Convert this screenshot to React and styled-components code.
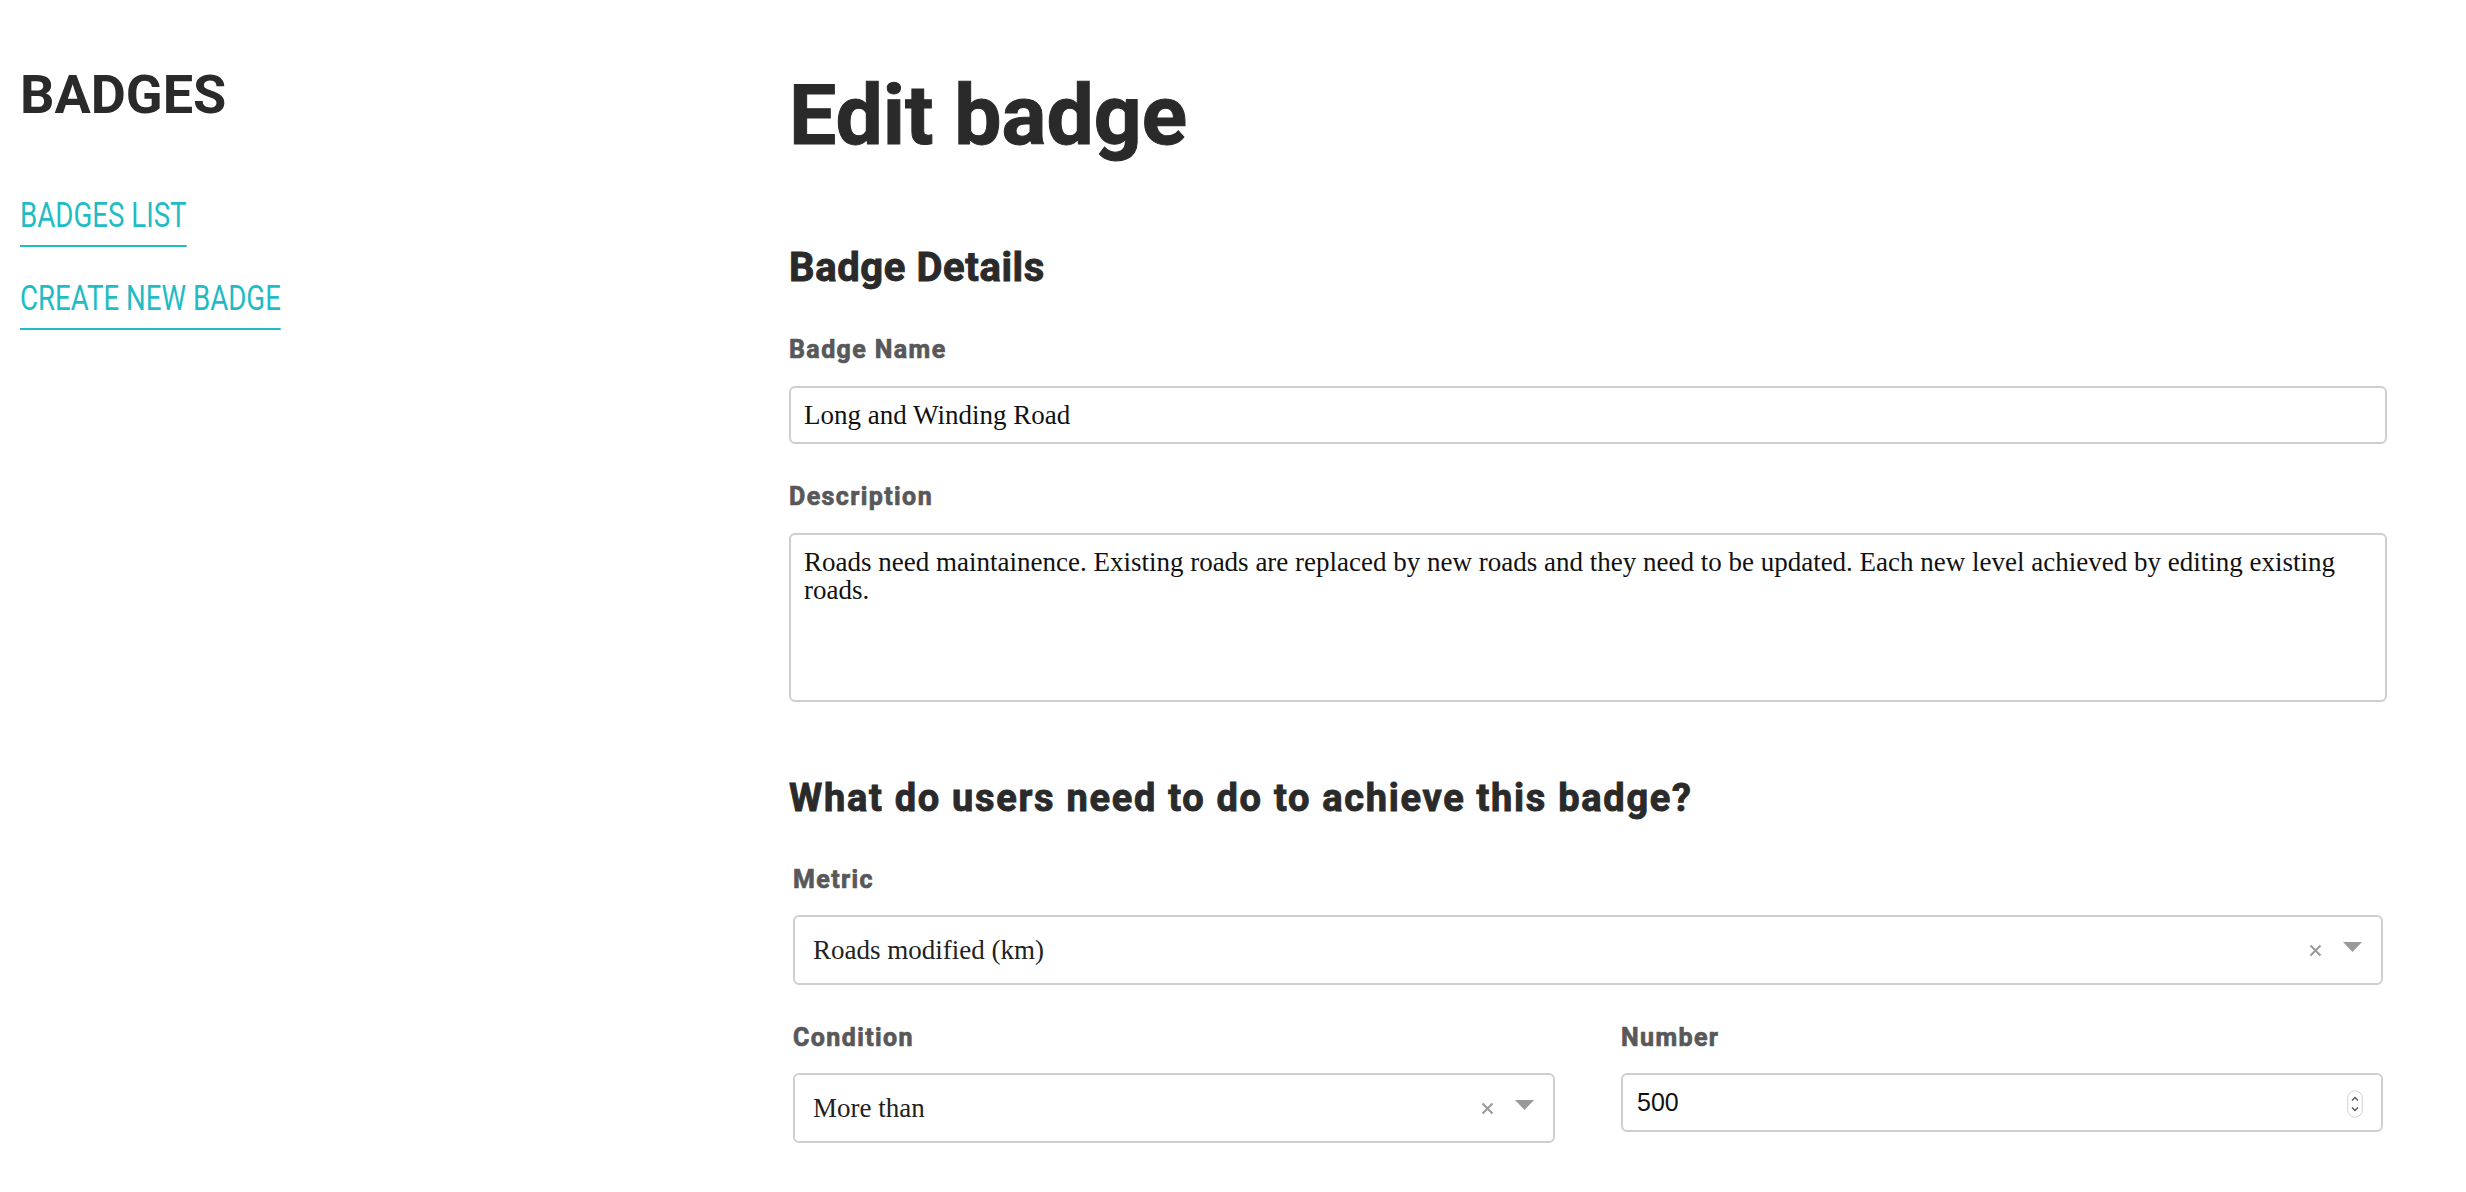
import React from "react"
import styled, { createGlobalStyle } from "styled-components"

const GlobalStyle = createGlobalStyle`
    body {
        margin: 0;
        background: #ffffff;
        font-family: "Roboto", "Liberation Sans", sans-serif;
    }
`

const Page = styled.div`
    display: grid;
    grid-template-columns: 789px 1598px;
    min-height: 1192px;
`

const Sidebar = styled.aside`
    padding: 68px 0 0 20px;
`

const SideTitle = styled.h1`
    margin: 0 0 76px;
    font: 700 54px/1 "Roboto", "Liberation Sans", sans-serif;
    color: #2a2a2a;
`

const Nav = styled.nav`
    display: flex;
    flex-direction: column;
    align-items: flex-start;
    gap: 34px;
`

// condensed look: no narrow face installed, so squeeze Roboto
const NavLink = styled.a`
    display: block;
    padding-bottom: 12px;
    border-bottom: 2px solid #1fbcc4;
    font: 400 35px/1 "Roboto", sans-serif;
    color: #1fbcc4;
    text-decoration: none;
    text-transform: uppercase;
    white-space: nowrap;
    transform: scaleX(0.79);
    transform-origin: left center;
`

const Main = styled.main`
    padding-top: 74px;
`

const PageTitle = styled.h2`
    margin: 0 0 90px;
    font: 700 84px/1 "Roboto", "Liberation Sans", sans-serif;
    color: #2a2a2a;
    -webkit-text-stroke: 1px #2a2a2a;
`

const SectionTitle = styled.h3`
    margin: ${p => p.$top || 0}px 0 ${p => p.$bottom}px;
    font: 700 ${p => p.$size}px/1 "Roboto", "Liberation Sans", sans-serif;
    letter-spacing: ${p => p.$track}px;
    color: #2a2a2a;
    -webkit-text-stroke: 0.9px #2a2a2a;
`

const Field = styled.div`
    display: flex;
    flex-direction: column;
    align-items: stretch;
    margin-bottom: ${p => p.$gap || 0}px;
`

const Label = styled.label`
    margin-bottom: ${p => p.$gap || 24}px;
    font: 700 25px/1 "Roboto", "Liberation Sans", sans-serif;
    letter-spacing: 1.4px;
    color: #58585a;
    -webkit-text-stroke: 0.7px #58585a;
`

const TextInput = styled.input`
    box-sizing: border-box;
    height: 58px;
    padding: 0 13px;
    border: 2px solid #cfcfcf;
    border-radius: 6px;
    font: 400 27px "Liberation Serif", serif;
    color: #111111;
    outline: none;
`

const TextArea = styled.textarea`
    box-sizing: border-box;
    height: 169px;
    padding: 13px;
    border: 2px solid #cfcfcf;
    border-radius: 6px;
    font: 400 27px/28px "Liberation Serif", serif;
    color: #111111;
    resize: none;
    outline: none;
`

const Criteria = styled.div`
    padding: 0 4px;
`

const Row = styled.div`
    display: grid;
    grid-template-columns: 1fr 1fr;
    column-gap: 66px;
    align-items: start;
`

const SelectBox = styled.div`
    box-sizing: border-box;
    display: flex;
    align-items: center;
    height: 70px;
    padding: 0 19px 0 18px;
    border: 2px solid #cfcfcf;
    border-radius: 6px;
    background: #ffffff;
`

const SelectValue = styled.span`
    flex: 1;
    font: 400 27px "Liberation Serif", serif;
    color: #222222;
`

const ClearIcon = styled.svg`
    width: 13px;
    height: 13px;
    margin-right: 21px;
`

const Caret = styled.svg`
    width: 19px;
    height: 10px;
    margin-top: -6px;
`

const NumberBox = styled.div`
    box-sizing: border-box;
    display: flex;
    align-items: center;
    height: 59px;
    padding: 0 18px 0 14px;
    border: 2px solid #cfcfcf;
    border-radius: 6px;
`

const NumberInput = styled.input`
    flex: 1;
    min-width: 0;
    border: none;
    padding: 0;
    font: 400 25px "Liberation Sans", "Roboto", sans-serif;
    color: #111111;
    outline: none;
`

const Spinner = styled.svg`
    width: 16px;
    height: 28px;
    margin-top: 2px;
`

const Select = ({ value }) => (
    <SelectBox>
        <SelectValue>{value}</SelectValue>
        <ClearIcon viewBox="0 0 13 13">
            <path d="M1.5 1.5 L11.5 11.5 M11.5 1.5 L1.5 11.5" stroke="#999" strokeWidth="2" fill="none" />
        </ClearIcon>
        <Caret viewBox="0 0 19 10">
            <path d="M0 0 H19 L9.5 10 Z" fill="#999" />
        </Caret>
    </SelectBox>
)

const App = () => {
    return (
        <>
            <GlobalStyle />
            <Page>
                <Sidebar>
                    <SideTitle>BADGES</SideTitle>
                    <Nav>
                        <NavLink href="#">Badges list</NavLink>
                        <NavLink href="#">Create new badge</NavLink>
                    </Nav>
                </Sidebar>
                <Main>
                    <PageTitle>Edit badge</PageTitle>
                    <SectionTitle $size={40} $bottom={49} $track={0.6}>Badge Details</SectionTitle>
                    <Field $gap={40}>
                        <Label>Badge Name</Label>
                        <TextInput readOnly value="Long and Winding Road" />
                    </Field>
                    <Field>
                        <Label>Description</Label>
                        <TextArea
                            readOnly
                            value="Roads need maintainence. Existing roads are replaced by new roads and they need to be updated. Each new level achieved by editing existing roads."
                        />
                    </Field>
                    <SectionTitle $size={38} $top={77} $bottom={50} $track={1.7}>
                        What do users need to do to achieve this badge?
                    </SectionTitle>
                    <Criteria>
                        <Field $gap={40}>
                            <Label as="span" $gap={23}>Metric</Label>
                            <Select value="Roads modified (km)" />
                        </Field>
                        <Row>
                            <Field>
                                <Label as="span" $gap={23}>Condition</Label>
                                <Select value="More than" />
                            </Field>
                            <Field>
                                <Label as="span" $gap={23}>Number</Label>
                                <NumberBox>
                                    <NumberInput readOnly value="500" />
                                    <Spinner viewBox="0 0 16 28">
                                        <rect x="0.75" y="0.75" width="14.5" height="26.5" rx="7.25" fill="#fff" stroke="#d4d4d4" strokeWidth="1" />
                                        <path d="M5 10.5 L8 7.5 L11 10.5 M5 17.5 L8 20.5 L11 17.5" stroke="#555" strokeWidth="1.4" fill="none" />
                                    </Spinner>
                                </NumberBox>
                            </Field>
                        </Row>
                    </Criteria>
                </Main>
            </Page>
        </>
    )
}

export default App
